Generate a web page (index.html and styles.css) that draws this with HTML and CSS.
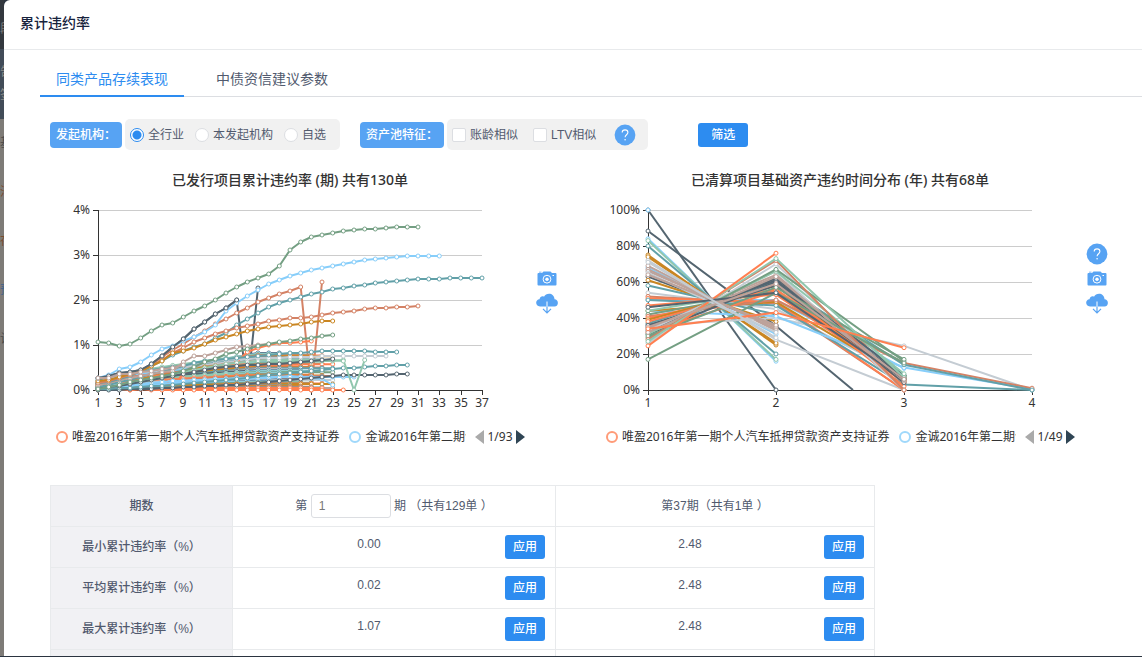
FILE: index.html
```html
<!DOCTYPE html>
<html lang="zh-CN">
<head>
<meta charset="utf-8">
<title>累计违约率</title>
<link rel="stylesheet" href="styles.css">
</head>
<body>
<aside class="backdrop" aria-hidden="true">
  <div class="backdrop-head">段</div>
  <div class="backdrop-nav"><span>告</span><span>签</span></div>
  <div class="backdrop-row">基</div>
  <div class="backdrop-row warm">池</div>
  <div class="backdrop-row warm">存</div>
  <div class="backdrop-row cool">预</div>
  <div class="backdrop-row">计</div>
</aside>
<main class="modal">
  <header class="modal-head"><h1>累计违约率</h1></header>
  <nav class="tabs">
    <a class="tab active" href="#same">同类产品存续表现</a>
    <a class="tab" href="#advice">中债资信建议参数</a>
  </nav>
  <div class="content">
    <form class="filters">
      <span class="tag">发起机构：</span>
      <div class="group orgs">
        <label><input type="radio" name="org" checked>全行业</label>
        <label><input type="radio" name="org">本发起机构</label>
        <label><input type="radio" name="org">自选</label>
      </div>
      <span class="tag">资产池特征：</span>
      <div class="group traits">
        <label><input type="checkbox">账龄相似</label>
        <label><input type="checkbox">LTV相似</label>
        <button type="button" class="help" aria-label="说明"><svg viewBox="0 0 22 22"><use href="#i-help"/></svg></button>
      </div>
      <button type="button" class="btn submit">筛选</button>
    </form>

    <section class="charts">
      <article class="chart">
        <div class="chart-main">
          <h2>已发行项目累计违约率 (期) 共有130单</h2>
          <svg class="plot" id="trend" viewBox="0 0 480 215"></svg>
          <div class="legend">
            <span class="key coral"></span><span class="name">唯盈2016年第一期个人汽车抵押贷款资产支持证券</span>
            <span class="key sky"></span><span class="name cut">金诚2016年第二期个</span>
            <button type="button" class="prev" aria-label="上一页"></button><span>1/93</span><button type="button" class="next" aria-label="下一页"></button>
          </div>
        </div>
        <div class="tools">
          <button type="button" aria-label="截图"><svg viewBox="0 0 22 22"><use href="#i-camera"/></svg></button>
          <button type="button" aria-label="下载"><svg viewBox="0 0 22 22"><use href="#i-cloud"/></svg></button>
        </div>
      </article>
      <article class="chart">
        <div class="chart-main">
          <h2>已清算项目基础资产违约时间分布 (年) 共有68单</h2>
          <svg class="plot" id="timing" viewBox="0 0 480 215"></svg>
          <div class="legend">
            <span class="key coral"></span><span class="name">唯盈2016年第一期个人汽车抵押贷款资产支持证券</span>
            <span class="key sky"></span><span class="name cut">金诚2016年第二期个</span>
            <button type="button" class="prev" aria-label="上一页"></button><span>1/49</span><button type="button" class="next" aria-label="下一页"></button>
          </div>
        </div>
        <div class="tools">
          <button type="button" aria-label="说明"><svg viewBox="0 0 22 22"><use href="#i-help"/></svg></button>
          <button type="button" aria-label="截图"><svg viewBox="0 0 22 22"><use href="#i-camera"/></svg></button>
          <button type="button" aria-label="下载"><svg viewBox="0 0 22 22"><use href="#i-cloud"/></svg></button>
        </div>
      </article>
    </section>

    <table class="stats">
      <colgroup><col class="c-name"><col class="c-first"><col class="c-last"></colgroup>
      <tr><th scope="col">期数</th><td><label class="period">第 <input type="text" value="1"> 期 （共有129单 ）</label></td><td>第37期（共有1单 ）</td></tr>
      <tr><th scope="row">最小累计违约率（%）</th><td><div class="cell"><span>0.00</span><button type="button" class="btn">应用</button></div></td><td><div class="cell"><span>2.48</span><button type="button" class="btn">应用</button></div></td></tr>
      <tr><th scope="row">平均累计违约率（%）</th><td><div class="cell"><span>0.02</span><button type="button" class="btn">应用</button></div></td><td><div class="cell"><span>2.48</span><button type="button" class="btn">应用</button></div></td></tr>
      <tr><th scope="row">最大累计违约率（%）</th><td><div class="cell"><span>1.07</span><button type="button" class="btn">应用</button></div></td><td><div class="cell"><span>2.48</span><button type="button" class="btn">应用</button></div></td></tr>
      <tr><th></th><td></td><td></td></tr>
    </table>
  </div>
</main>

<svg class="sprite" aria-hidden="true">
  <symbol id="i-help" viewBox="0 0 22 22">
    <circle cx="11" cy="11" r="10.4" fill="#57a3f3"/>
    <path d="M8.2 8.6C8.2 4.900 13.900 5 13.900 8.500C13.900 10.700 11.100 10.800 11.100 13.300" fill="none" stroke="#fff" stroke-width="1.1"/>
    <circle cx="11.100" cy="15.700" r=".8" fill="#fff"/>
  </symbol>
  <symbol id="i-camera" viewBox="0 0 22 22">
    <path d="M2.500 5H6L7.500 3.500H14.500L16 5H19.500Q20.500 5 20.500 6V16.500Q20.500 17.500 19.500 17.500H2.500Q1.500 17.500 1.500 16.500V6Q1.500 5 2.500 5ZM3 3.700H5.500V4.600H3Z" fill="#57a3f3"/>
    <circle cx="11" cy="11.200" r="3.900" fill="none" stroke="#fff"/>
    <circle cx="11" cy="11.200" r="1.700" fill="#fff"/>
    <path d="M16.500 7.500H18" stroke="#fff"/>
  </symbol>
  <symbol id="i-cloud" viewBox="0 0 22 22">
    <path d="M4 13.500C-1 13.500-1 6.500 3.500 6.300C4 3.500 6.500 2.800 8 3.800C10-1 18.500-.5 18.500 6.300C23 6.500 23 13.500 18.500 13.500Z" fill="#57a3f3"/>
    <path d="M11 8.500V14" stroke="#fff"/>
    <path d="M11 13.500V19.500M7 15.800L11 19.800L15 15.800" fill="none" stroke="#57a3f3" stroke-width="1.200"/>
  </symbol>
</svg>
<script src="charts.js"></script>
</body>
</html>
```
FILE: styles.css
```css
* { box-sizing: border-box; }
body {
  margin: 0;
  height: 100vh;
  overflow: hidden;
  display: flex;
  padding-bottom: 1px;
  background: #2b3440;
  color: #515a6e;
  font: 12px/18px "Liberation Sans", "Noto Sans CJK SC", sans-serif;
}
button, input { font: inherit; margin: 0; }
button { border: 0; padding: 0; background: none; cursor: pointer; }
.sprite { position: absolute; width: 0; height: 0; }

.backdrop { flex: none; width: 4px; overflow: hidden; background: #7e7b77; color: #4b4a49; }
.backdrop-head { height: 49px; padding-top: 20px; background: #33383e; color: #777; }
.backdrop-nav { display: flex; flex-direction: column; gap: 5px; height: 70px; padding-top: 14px; background: #424c58; color: #8c8c88; }
.backdrop-row { height: 49px; padding-top: 15px; }
.backdrop-row.warm { color: #7a4b30; }
.backdrop-row.cool { color: #3f638c; }

.modal { flex: 1; min-width: 0; overflow: hidden; background: #fff; border-top-left-radius: 6px; }
.modal-head { height: 50px; padding: 14px 16px; border-bottom: 1px solid #e8eaec; }
h1 { margin: 0; color: #17233d; font-size: 14px; line-height: 18px; font-weight: 500; }
.tabs { display: flex; gap: 16px; height: 47px; margin-left: 36px; padding-top: 12px; border-bottom: 1px solid #dcdee2; }
.tab { height: 35px; padding: 8px 16px; color: #515a6e; font-size: 14px; text-decoration: none; }
.tab.active { color: #2d8cf0; border-bottom: 2px solid #2d8cf0; }
.content { padding: 22px 0 0 46px; }

.filters { display: flex; align-items: center; height: 31px; white-space: nowrap; }
.tag { height: 26px; padding: 4px 6px; border-radius: 4px; background: #57a3f3; color: #fff; font-weight: 500; }
.group { display: flex; align-items: center; height: 31px; margin-left: 3px; border-radius: 5px; background: #f1f1f1; }
.group label { display: flex; align-items: center; gap: 4px; }
.orgs { gap: 11px; padding: 0 14px 0 5px; margin-right: 20px; }
.traits { gap: 15px; padding: 0 12px 0 5px; margin-right: 50px; }
.group input { appearance: none; width: 14px; height: 14px; border: 1px solid #dcdee2; background: #fff; }
.group input[type=radio] { border-radius: 50%; }
.group input[type=checkbox] { border-radius: 2px; }
.group input:checked { border-color: #2d8cf0; background: radial-gradient(circle, #2d8cf0 4px, #fff 5px); }
.help { width: 22px; height: 22px; margin-left: 3px; }
.btn { width: 40px; height: 24px; border-radius: 3px; background: #2d8cf0; color: #fff; font-weight: 500; }
.btn.submit { width: 50px; }
button svg { display: block; width: 22px; height: 22px; }

.charts { display: flex; gap: 42px; margin-top: 22px; }
.chart { display: flex; flex: none; gap: 6px; }
.chart-main { width: 480px; font-family: "Noto Sans", "Noto Sans CJK SC", sans-serif; color: #333; }
h2 { margin: 0; height: 28px; font-size: 14px; line-height: 16px; font-weight: 500; text-align: center; }
.plot { display: block; width: 100%; }
.plot text { font-size: 12px; fill: #333; }
.legend { display: flex; align-items: center; height: 44px; padding-left: 6px; white-space: nowrap; }
.key { width: 12px; height: 12px; margin-right: 4px; border: 2px solid; border-radius: 50%; }
.coral { color: #ff9b78; }
.sky { color: #9fd8fb; }
.name { margin-right: 10px; }
.name + .key + .name { margin-right: 9px; }
.name, .legend span { color: #333; }
.legend .coral { color: #ff9b78; }
.legend .sky { color: #9fd8fb; }
.name.cut { width: 101px; overflow: hidden; }
.prev, .next { border: solid transparent; border-width: 7px 0; }
.prev { border-right: 9px solid #aaa; margin-right: 3px; }
.next { border-left: 9px solid #2f4554; margin-left: 3px; }
.tools { display: flex; flex-direction: column; justify-content: flex-end; gap: 3px; height: 143px; }

.stats { width: 825px; margin-top: 26px; border-collapse: collapse; table-layout: fixed; }
.c-name { width: 182px; }
.c-first { width: 323px; }
.c-last { width: 319px; }
.stats th, .stats td { height: 41px; padding: 0; border: 1px solid #e8eaec; text-align: center; }
.stats th { background: #f1f1f4; font-weight: 500; }
.period input { width: 80px; height: 24px; padding: 0 7px; border: 1px solid #dcdee2; border-radius: 3px; color: #777; }
.cell { display: flex; align-items: flex-start; padding-right: 10px; }
.cell span { flex: 1; }
```
FILE: charts.js
```js
const C = { coral: '#ff7f50', sky: '#87cefa', dark: '#546570', green: '#749f83', gold: '#ca8622',
  rust: '#d48265', teal: '#61a0a8', mint: '#91c7ae', grey: '#c4ccd3', taupe: '#bda29a' };
const LEFT = 48, TOP = 10, W = 384, H = 180, BASE = TOP + H;

function axes(count, every, yLabels) {
  let s = '';
  const n = yLabels.length - 1;
  yLabels.forEach((t, i) => {
    const y = BASE - Math.round(H * i / n) + 0.5;
    s += `<path d="M${LEFT} ${y}H${LEFT + W}" stroke="${i ? '#ccc' : '#333'}"/><path d="M${LEFT - 5} ${y}H${LEFT}" stroke="#333"/>`;
    s += `<text x="${LEFT - 8}" y="${y + 3}" text-anchor="end">${t}</text>`;
  });
  s += `<path d="M${LEFT + 0.5} ${TOP}V${BASE}" stroke="#333"/>`;
  for (let i = 1; i <= count; i += every) {
    const x = Math.round(LEFT + W * (i - 1) / (count - 1));
    s += `<path d="M${x + 0.5} ${BASE}v5" stroke="#333"/><text x="${x}" y="${BASE + 17}" text-anchor="middle">${i}</text>`;
  }
  return s;
}

function line(color, points) {
  const d = points.map(p => p[0].toFixed(1) + ',' + p[1].toFixed(1)).join(' ');
  return `<polyline points="${d}" fill="none" stroke="${color}" stroke-width="2" stroke-linejoin="round"/>` +
    points.filter(p => !p[2]).map(p => `<circle cx="${p[0].toFixed(1)}" cy="${p[1].toFixed(1)}" r="2" fill="#fff" stroke="${color}"/>`).join('');
}

/* Cumulative default rate by period; heights are measured above the base line. */
const step = W / 36;
const trendLine = (c, hs, start = 1) => line(C[c], hs.map((h, i) => [LEFT + (start - 1 + i) * step, BASE - h]));
let trend = axes(37, 2, ['0%', '1%', '2%', '3%', '4%']);
trend += trendLine('dark', [12,14,17,18,20,26,34,43,51,61,68,76,82,90,0,102]);
trend += trendLine('rust', [6,8,11,14,18,25,33,40,46,53,59,66,71,77,82,88,92,96,99,103,0,108]);
const palette = ['dark', 'teal', 'coral', 'sky', 'taupe', 'gold', 'mint', 'grey', 'rust', 'green'];
for (let k = 0; k < 56; k++) {
  const end = 18 + (k * 7) % 6, top = 37 * (1 - k / 56), first = (k * 5) % 12 * (1 - k / 70);
  const hs = [];
  for (let i = 0; i < end; i++) {
    const t = Math.min(1, i / 15);
    hs.push(Math.max(0, first * (1 - t) + top * Math.pow(t, 0.8)));
  }
  trend += trendLine(palette[(k * 3 + (k / 10 | 0)) % 10], hs);
}
[
  ['coral', [2,1,1,0,1,1,1,1,1,2,2,2,2,2,2,2,2,2,2,2,2,2]],
  ['coral', [2,1,1,0,1,0,0,0,0,0,0,0,0,0,0,0,0,0,0,0,0,0,0,0]],
  ['coral', [4,6,8,9,11,13,15,2,17,20,22,24,26,26,27]],
  ['coral', [28,38,42,45,47,47,48,49], 14],
  ['gold', [5,7,8,11,12,12,13,14,18,21,23,24]],
  ['sky', [1,2,3,4,5,5,6,7,7,8,8,9,10,11,11,12,12,13,14,13,12,11,5]],
  ['sky', [2,3,4,5,6,7,8,9,9,10,10,11,11,12,12,12,13,13,13,13,13,13,13,13,13]],
  ['dark', [0,0,0,1,1,1,2,2,3,3,4,4,5,5,6,7,8,9,10,11,12,13,14,15,15,15,15,15,16,16]],
  ['teal', [1,1,2,2,3,4,4,5,6,7,8,9,10,11,12,14,15,16,17,18,19,20,21,22,22,23,24,24,25,25]],
  ['mint', [29,29,29,29,29,29,29,30,0,30], 17],
  ['mint', [2,3,5,7,8,10,12,15,18,20,22,24,26,27,28,29,30,30,30,30,30,30,30,29]],
  ['grey', [3,5,8,11,13,16,19,21,24,26,28,29,30,31,31,32,32,32,33,33,33,34,34,34,34,34,34,34]],
  ['dark', [2,3,4,6,8,10,12,14,16,18,20,22,23,24,25,25,26,26,27,28,29,30,31]],
  ['teal', [3,5,8,10,13,16,18,21,24,27,29,30,31,32,33,34,35,36,37,37,38,39,39,39,39,39,38,38,38]],
  ['taupe', [5,7,10,12,14,16,18,19,28,34,34,37,40,43,44,45,46]],
  ['green', [1,3,5,8,10,12,14,16,19,23,28,31,36,38,41,44,46,48,49,51,52,54,55]],
  ['teal', [7,8,11,14,19,24,29,35,39,43,46,52,57,65,71,77,83,87,90,93,96,98,101,102,104,105,107,108,109,110,111,111,111,112,112,112,112]],
  ['rust', [7,9,12,15,19,24,30,37,42,48,52,56,59,62,64,66,69,70,72,72,73,75,77,78,79,81,82,82,83,83,84]],
  ['gold', [9,10,13,16,19,24,29,37,39,42,46,50,53,56,59,61,63,64,65,66,68,69,69]],
  ['sky', [12,15,21,23,28,35,41,44,49,53,58,65,79,87,94,100,106,110,114,117,120,122,124,126,128,130,131,132,133,134,134,134,134]],
  ['dark', [12,14,17,18,20,26,34,43,51,61,68,76,82,90]],
  ['taupe', [12,12,16,16,18,19,21,22,25]],
  ['green', [48,47,44,46,52,59,65,67,73,79,84,90,97,103,108,112,116,124,140,148,153,155,157,159,160,161,161,162,163,163,163]],
].forEach(a => { trend += trendLine(...a); });
document.getElementById('trend').innerHTML = trend;

/* Share of defaults by year, in percent. */
let timing = axes(4, 1, ['0%', '20%', '40%', '60%', '80%', '100%']);
timing += line(C.dark, [[LEFT, BASE - 159], [LEFT + 128, BASE - 64], [LEFT + 205, BASE, true]]);
timing += line(C.dark, [[LEFT, TOP], [LEFT + 128, BASE]]);
[
  ['sky', 84, 16], ['mint', 83, 17], ['teal', 80, 20], ['gold', 75, 25], ['gold', 74, 26],
  ['sky', 68, 31], ['grey', 72, 28, 0], ['dark', 63, 36], ['gold', 61, 38], ['taupe', 69, 33],
  ['grey', 54, 45, 8], ['grey', 36, 40, 24.500, 0], ['grey', 26, 70, 3],
  ['sky', 50, 50, 12], ['teal', 58, 42], ['rust', 52, 48, 0], ['coral', 51, 49, 0], ['teal', 50, 47, 3, 0],
  ['coral', 47, 53, 5], ['sky', 44, 41, 12.500, 0.500], ['gold', 44, 49, 7], ['mint', 44, 56, 6],
  ['green', 42, 55, 8], ['rust', 41, 50, 15, 1], ['coral', 40, 56, 4], ['gold', 39, 58, 5], ['teal', 37, 60, 14, 0],
  ['coral', 38, 58, 2], ['dark', 35, 61, 6], ['dark', 36, 58, 7], ['taupe', 34, 64, 5],
  ['dark', 33, 62, 8], ['grey', 33, 66, 0], ['dark', 31, 60, 4], ['coral', 32, 55, 6], ['mint', 31, 66, 9],
  ['green', 29, 67, 16], ['green', 30, 57, 17], ['taupe', 32, 63, 5], ['rust', 28, 72, 0],
  ['mint', 27, 73, 7], ['coral', 24.500, 76], ['green', 17, 54, 15],
  ['taupe', 67, 34], ['taupe', 66, 35], ['grey', 65, 32], ['taupe', 64, 36],
  ['dark', 46, 54, 6], ['taupe', 35, 59, 6], ['coral', 34, 43, 23.500], ['grey', 71, 29],
].forEach(([c, ...v]) => {
  timing += line(C[c], v.map((p, i) => [LEFT + i * W / 3, BASE - p * H / 100]));
});
timing += line(C.sky, [[LEFT, TOP]]);
document.getElementById('timing').innerHTML = timing;
```
